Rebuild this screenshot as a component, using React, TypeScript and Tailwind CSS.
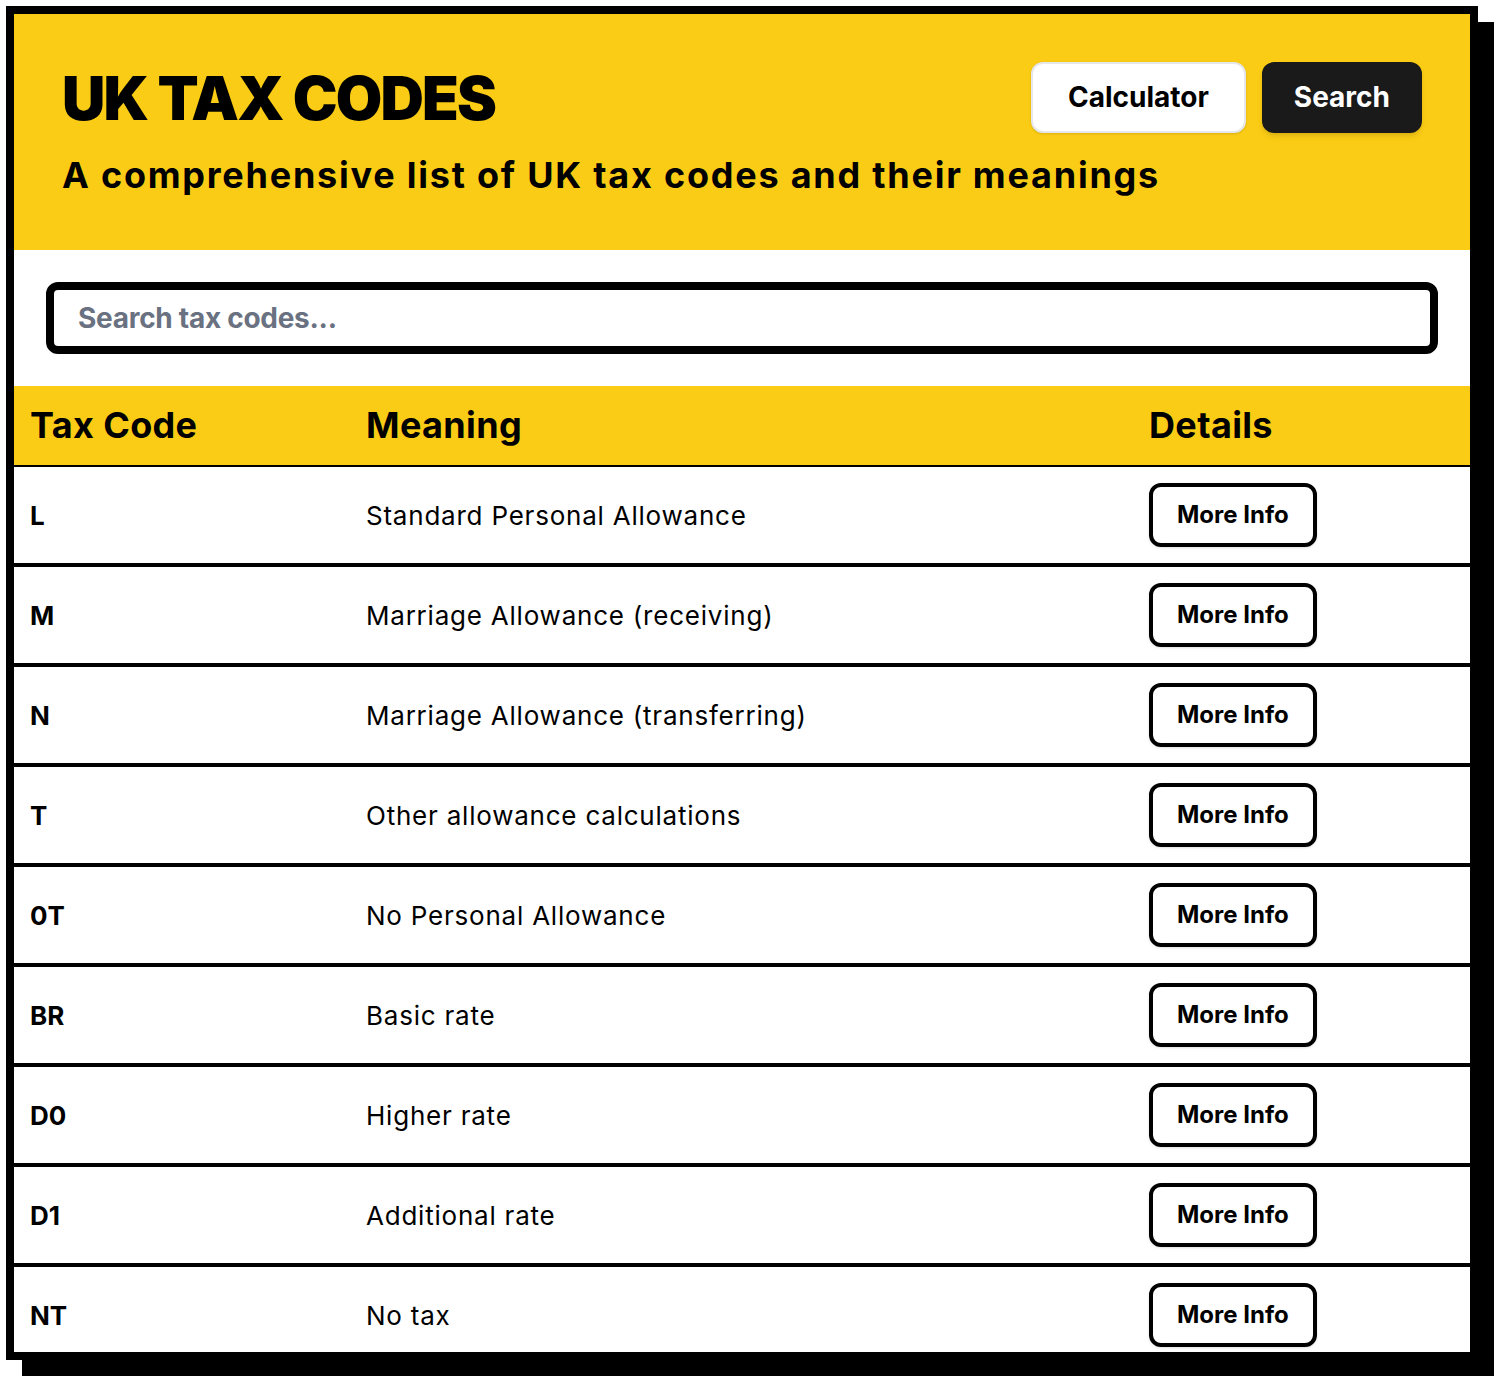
const codes = [
  { code: 'L', meaning: 'Standard Personal Allowance' },
  { code: 'M', meaning: 'Marriage Allowance (receiving)' },
  { code: 'N', meaning: 'Marriage Allowance (transferring)' },
  { code: 'T', meaning: 'Other allowance calculations' },
  { code: '0T', meaning: 'No Personal Allowance' },
  { code: 'BR', meaning: 'Basic rate' },
  { code: 'D0', meaning: 'Higher rate' },
  { code: 'D1', meaning: 'Additional rate' },
  { code: 'NT', meaning: 'No tax' },
];

export default function App() {
  return (
    <div className="min-h-screen bg-white pl-[6px] pt-[6px] font-['Inter','Liberation_Sans',sans-serif] text-black">
      <div className="h-[1354px] w-[1472px] overflow-hidden border-8 border-black bg-white shadow-[16px_16px_0_0_#000]">
        {/* Header */}
        <header className="bg-[#facc15] p-12">
          <div className="flex items-center justify-between">
            <h1 className="text-[60px] leading-none font-black tracking-[-0.03em]">UK TAX CODES</h1>
            <div className="flex gap-4">
              <button className="rounded-xl border-2 border-gray-200 bg-white px-[35px] py-4 text-[28px] leading-[35px] font-bold shadow-sm">
                Calculator
              </button>
              <button className="rounded-xl border-2 border-[#1a1a1a] bg-[#1a1a1a] px-[30px] py-4 text-[28px] leading-[35px] font-bold text-white shadow-md">
                Search
              </button>
            </div>
          </div>
          <p className="mt-4 text-[36px] leading-[53px] font-bold tracking-[0.049em]">
            A comprehensive list of UK tax codes and their meanings
          </p>
        </header>

        {/* Search box */}
        <div className="p-8">
          <input
            type="text"
            placeholder="Search tax codes..."
            className="h-[72px] w-full rounded-xl border-8 border-black px-6 text-[28px] font-bold tracking-[-0.01em] outline-none placeholder:text-gray-500"
          />
        </div>

        {/* Table */}
        <div className="grid grid-cols-[336px_783px_1fr] border-b-2 border-black bg-[#facc15] text-[36px] leading-[39px] font-bold tracking-[0.01em]">
          <div className="px-4 py-5">Tax Code</div>
          <div className="px-4 py-5">Meaning</div>
          <div className="px-4 py-5">Details</div>
        </div>
        {codes.map((c) => (
          <div key={c.code} className="grid grid-cols-[336px_783px_1fr] items-center border-b-4 border-black text-[26px]">
            <div className="px-4 font-bold">{c.code}</div>
            <div className="px-4 tracking-[0.03em]">{c.meaning}</div>
            <div className="px-4 py-4">
              <button className="rounded-xl border-4 border-black bg-white px-6 py-3 text-2xl font-bold shadow-sm">
                More Info
              </button>
            </div>
          </div>
        ))}
      </div>
    </div>
  );
}
